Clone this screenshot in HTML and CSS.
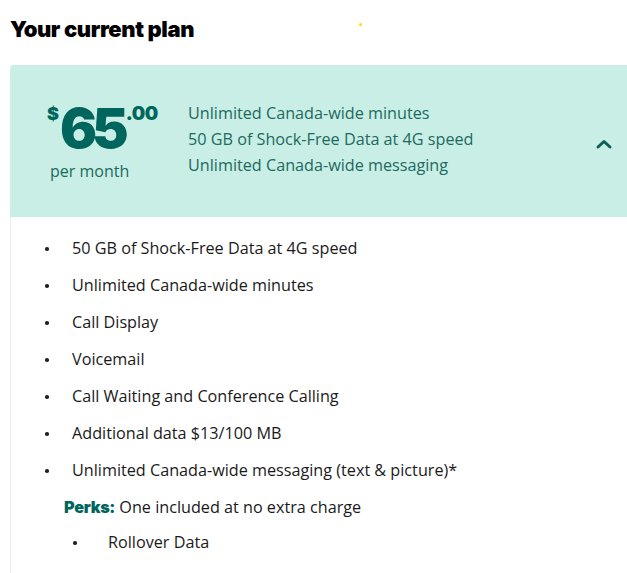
FILE: index.html
```html
<!DOCTYPE html>
<html lang="en">
<head>
  <meta charset="UTF-8" />
  <meta name="viewport" content="width=device-width,initial-scale=1.0"/>
  <title>Your current plan</title>
  <link rel="stylesheet" href="styles.css">
</head>
<body>
  <section class="plan">
    <h1 class="plan-title">Your current plan</h1>
    <span class="dot"></span>
    <div class="plan-card">
      <div class="plan-summary">
        <div class="price">
          <div class="amount"><span class="cur">$</span><span class="big">65</span><span class="cents">.00</span></div>
          <div class="per">per month</div>
        </div>
        <ul class="highlights">
          <li>Unlimited Canada-wide minutes</li>
          <li>50 GB of Shock-Free Data at 4G speed</li>
          <li>Unlimited Canada-wide messaging</li>
        </ul>
        <button class="toggle" aria-label="Collapse">
          <svg width="18" height="12" viewBox="0 0 18 12"><path d="M3 9 L9 3.5 L15 9" fill="none" stroke="#0b5f57" stroke-width="3" stroke-linecap="round" stroke-linejoin="round"/></svg>
        </button>
      </div>
      <div class="plan-details">
        <ul class="features">
          <li>50 GB of Shock-Free Data at 4G speed</li>
          <li>Unlimited Canada-wide minutes</li>
          <li>Call Display</li>
          <li>Voicemail</li>
          <li>Call Waiting and Conference Calling</li>
          <li>Additional data $13/100 MB</li>
          <li>Unlimited Canada-wide messaging (text &amp; picture)*</li>
        </ul>
        <p class="perks"><strong>Perks:</strong> One included at no extra charge</p>
        <ul class="features perk-list">
          <li>Rollover Data</li>
        </ul>
      </div>
    </div>
  </section>
</body>
</html>
```

FILE: styles.css
```css
:root {
  --teal: #00665d;
  --teal-text: #1d6a60;
  --mint: #c8eee5;
  --text: #1a1a1a;
  --line: #ececec;
}
* { box-sizing: border-box; margin: 0; padding: 0; }
body {
  font-family: "Open Sans", "Noto Sans", sans-serif;
  background: #fff;
  color: var(--text);
}
.plan { position: relative; }
.plan-title {
  font-family: Inter, sans-serif;
  font-weight: 900;
  font-size: 22px;
  letter-spacing: -0.4px;
  line-height: 26px;
  padding: 16px 0 0 10px;
  height: 65px;
  color: #000;
}
.dot {
  position: absolute;
  left: 359px; top: 23px;
  width: 3px; height: 3px;
  border-radius: 50%;
  background: #f5e000;
}
.plan-card { margin-left: 10px; }
.plan-summary {
  display: flex;
  align-items: center;
  height: 152px;
  background: var(--mint);
  border-top-left-radius: 4px;
  padding: 0 0 0 37px;
}
.price { width: 141px; color: var(--teal); margin-top: 2px; }
.amount { display: flex; align-items: flex-start; }
.cur { font-family: Inter, sans-serif; font-weight: 900; font-size: 18px; line-height: 20px; }
.big { font-family: Inter, sans-serif; font-weight: 900; font-size: 55px; line-height: 48px; letter-spacing: -5px; margin-left: 1px; }
.cents { font-family: Inter, sans-serif; font-weight: 900; font-size: 19px; line-height: 20px; margin-left: 2px; letter-spacing: -0.5px; }
.per { font-size: 16px; line-height: 20px; color: var(--teal-text); padding-left: 3px; margin-top: 9px; }
.highlights {
  list-style: none;
  flex: 1;
  font-size: 16.2px;
  line-height: 26px;
  color: var(--teal-text);
  margin-top: -4px;
}
.toggle {
  background: none;
  border: none;
  width: 32px;
  display: flex;
  justify-content: flex-start;
  margin-top: 6px;
}
.plan-details {
  border-left: 1px solid var(--line);
  padding: 13px 0 20px 0;
}
.features {
  list-style: none;
  font-size: 16.2px;
  line-height: 37px;
  padding-left: 61px;
}
.features li { position: relative; }
.features li::before {
  content: "";
  position: absolute;
  left: -27px; top: 17px;
  width: 3.5px; height: 3.5px;
  border-radius: 50%;
  background: #222;
}
.perks {
  font-size: 16.2px;
  line-height: 37px;
  padding-left: 53px;
}
.perks strong {
  font-family: Inter, sans-serif;
  font-weight: 900;
  color: var(--teal);
  letter-spacing: -0.3px;
}
.perk-list { padding-left: 97px; line-height: 33px; }
.perk-list li::before { left: -35px; top: 15px; }
```
